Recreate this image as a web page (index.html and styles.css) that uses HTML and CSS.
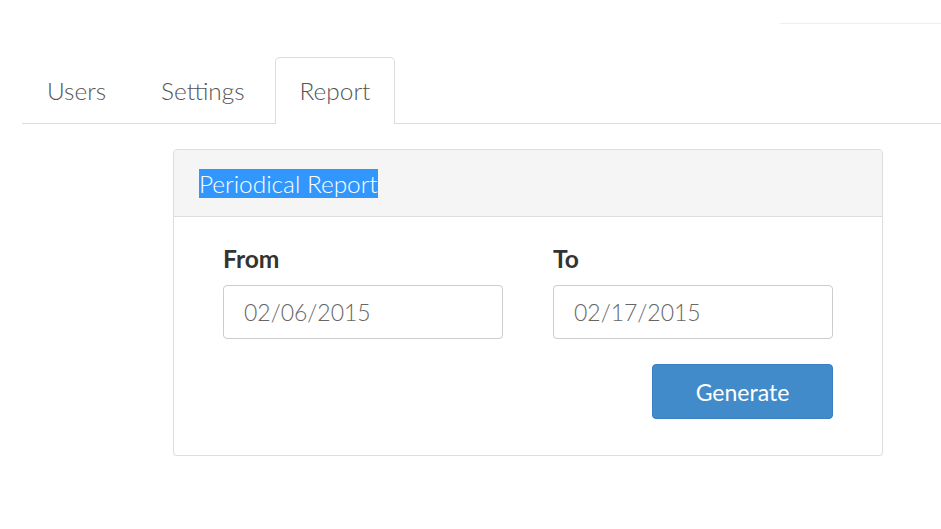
FILE: index.html
```html
<!DOCTYPE html>
<html>
<head>
<meta charset="utf-8">
<link rel="stylesheet" href="styles.css">
</head>
<body>
<div class="topline"></div>
<ul class="tabs">
  <li class="tab">Users</li>
  <li class="tab">Settings</li>
  <li class="tab active">Report</li>
</ul>
<div class="panel">
  <div class="panel-heading"><span class="sel">Periodical Report</span></div>
  <div class="panel-body">
    <div class="row">
      <div class="field">
        <label class="lbl">From</label>
        <div class="input">02/06/2015</div>
      </div>
      <div class="field">
        <label class="lbl">To</label>
        <div class="input">02/17/2015</div>
      </div>
    </div>
    <div class="actions">
      <button class="btn">Generate</button>
    </div>
  </div>
</div>
</body>
</html>
```
FILE: styles.css
```css
html, body {
  margin: 0;
  padding: 0;
  background: #fff;
  font-family: Lato, "Open Sans", sans-serif;
  color: #333;
}
.topline {
  margin: 23px 0 0 780px;
  height: 0;
  border-top: 1px solid #eee;
}
.tabs {
  list-style: none;
  margin: 33px 0 0 22px;
  padding: 0;
  display: flex;
  border-bottom: 1px solid #ddd;
}
.tab {
  font-size: 24.4px;
  font-weight: 300;
  color: #555;
  padding: 0 24px;
  height: 65px;
  line-height: 66px;
  margin-right: 5px;
  border: 1px solid transparent;
  border-bottom: none;
  border-radius: 5px 5px 0 0;
  margin-bottom: -1px;
}
.tab.active {
  border-color: #ddd;
  background: #fff;
  height: 66px;
}
.panel {
  margin: 25px 0 0 173px;
  width: 708px;
  border: 1px solid #ddd;
  border-radius: 4px;
  box-shadow: 0 1px 1px rgba(0,0,0,0.05);
}
.panel-heading {
  background: #f5f5f5;
  border-bottom: 1px solid #ddd;
  border-radius: 4px 4px 0 0;
  height: 66px;
  padding: 0 25px;
  display: flex;
  align-items: center;
  font-size: 24.4px;
  font-weight: 300;
}
.sel {
  background: #3297fd;
  color: #fff;
  line-height: 29px;
}
.panel-body {
  padding: 27px 49px 36px 49px;
}
.row {
  display: flex;
  gap: 50px;
}
.field {
  flex: 1;
  display: flex;
  flex-direction: column;
}
.lbl {
  font-size: 24.6px;
  font-weight: 700;
  color: #333;
  line-height: 29px;
  margin-bottom: 12px;
}
.input {
  height: 52px;
  border: 1px solid #ccc;
  border-radius: 4px;
  padding: 0 20px;
  display: flex;
  align-items: center;
  font-size: 23px;
  font-weight: 300;
  color: #666;
}
.actions {
  display: flex;
  justify-content: flex-end;
  margin-top: 25px;
}
.btn {
  width: 181px;
  height: 55px;
  background: #428bca;
  border: 1px solid #3a7fc0;
  border-radius: 4px;
  color: #fff;
  font-family: Lato, sans-serif;
  font-size: 23px;
  font-weight: 400;
}
```
